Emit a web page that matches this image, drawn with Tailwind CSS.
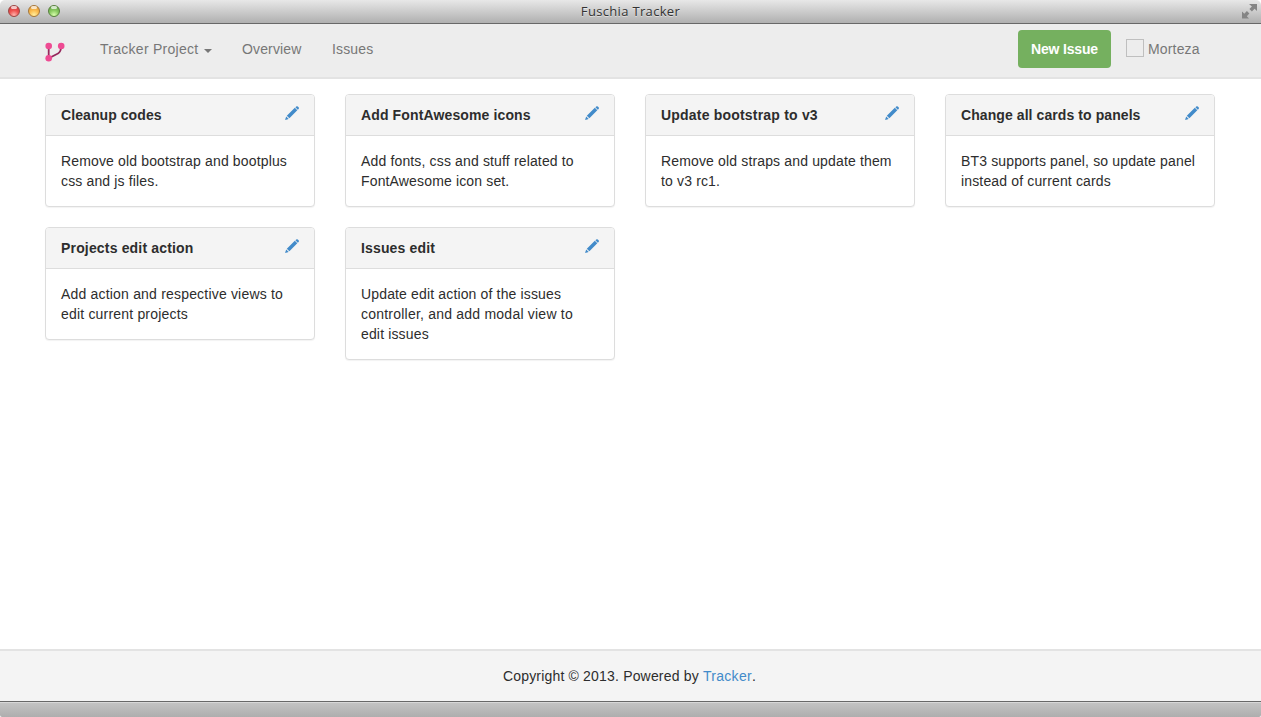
<!DOCTYPE html>
<html lang="en">
<head>
<meta charset="utf-8">
<title>Fuschia Tracker</title>
<script src="https://cdn.jsdelivr.net/npm/@tailwindcss/browser@4"></script>
</head>
<body class="bg-white">
<svg class="hidden">
  <symbol id="pencil" viewBox="0 0 14 14">
    <path fill="#428bca" d="M11.200.5a1.200 1.200 0 0 1 1.600 0l.8.8a1.200 1.200 0 0 1 0 1.600l-.8.8-2.400-2.400zM9.800 1.800l2.500 2.500-7.900 7.900L1.800 9.700zM1.200 10.400l2.500 2.500L0 14z"/>
  </symbol>
</svg>
<div class="flex h-[717px] w-[1261px] flex-col overflow-hidden rounded-t-[5px] rounded-b-[2px] bg-white text-[14px] leading-5 text-[#2d2d2d] font-['Liberation_Sans',Arial,sans-serif]">
  <header class="grid h-6 shrink-0 grid-cols-[1fr_auto_1fr] items-center border-b border-[#686868] bg-linear-to-b from-[#e8e8e8] to-[#b0b0b0] pr-1 pl-2">
    <div class="flex gap-2 pb-px">
      <span class="h-3 w-3 rounded-full border border-[#9a4643] bg-[radial-gradient(circle_at_50%_90%,#ffb5ae_0%,#ee5350_45%,#c93235_100%)]"><i class="mx-auto block h-[3px] w-[6px] rounded-full bg-white/70"></i></span>
      <span class="h-3 w-3 rounded-full border border-[#a47638] bg-[radial-gradient(circle_at_50%_90%,#fff0a0_0%,#fbbd50_45%,#d98b2d_100%)]"><i class="mx-auto block h-[3px] w-[6px] rounded-full bg-white/70"></i></span>
      <span class="h-3 w-3 rounded-full border border-[#567f3d] bg-[radial-gradient(circle_at_50%_90%,#d9ffae_0%,#8bcb62_45%,#58993c_100%)]"><i class="mx-auto block h-[3px] w-[6px] rounded-full bg-white/70"></i></span>
    </div>
    <h1 class="-ml-1 pb-0.5 text-[13px] tracking-[0.33px] text-[#333] font-['Open_Sans',sans-serif] [text-shadow:0_1px_0_#ffffff80]">Fuschia Tracker</h1>
    <svg class="h-[15px] w-[15px] justify-self-end" viewBox="0 0 15 15" fill="#858585"><path d="M7 0h8v7l-2.400-2.200-2.700 2.700-2.500-2.400 2.500-2.700zM0 7.500l2.300 2.200 2.600-2.600 2.500 2.400-2.600 2.700L7 14.500H0z"/></svg>
  </header>

  <nav class="flex h-[55px] shrink-0 items-start border-b-2 border-[#e3e3e3] bg-[#ededed] pr-[61px] pl-[45px] text-[#777]">
    <svg class="mt-[18px] h-5 w-5" viewBox="0 0 20 20"><path d="M3.700 4v12.200L13 11.500Q16 10 16.200 4" fill="none" stroke="#96285c" stroke-width="1.800"/><g fill="#ee4b93"><circle cx="3.700" cy="4" r="3.300"/><circle cx="16.200" cy="4" r="3.300"/><circle cx="3.700" cy="16.200" r="3.300"/></g></svg>
    <a class="mt-[15px] ml-[35px] flex w-[112px] items-center whitespace-nowrap"><span class="w-[99px] tracking-[0.27px]">Tracker Project</span><i class="mt-1 ml-[5px] border-x-4 border-t-4 border-x-transparent border-t-[#777]"></i></a>
    <a class="mt-[15px] ml-[30px] w-[60px] tracking-[0.14px]">Overview</a>
    <a class="mt-[15px] ml-[30px] tracking-[0.14px]">Issues</a>
    <button class="mt-[6px] ml-auto h-[38px] w-[93px] rounded-[4px] bg-[#75b05f] font-bold tracking-[-0.18px] text-white">New Issue</button>
    <span class="mt-[15px] ml-[15px] h-[18px] w-[18px] border border-[#bfbfbf]"></span>
    <a class="mt-[15px] ml-1 w-[52px] tracking-[0.16px]">Morteza</a>
  </nav>

  <main class="grid flex-1 grid-cols-[repeat(4,270px)] content-start items-start gap-x-[30px] gap-y-5 pt-[15px] pl-[45px] tracking-[0.15px]">
    <section class="rounded-[4px] border border-[#ddd] bg-white shadow-[0_1px_1px_#0000000d]"><div class="flex h-[41px] justify-between rounded-t-[3px] border-b border-[#ddd] bg-[#f4f4f4] px-[15px] pt-[10px]"><h3 class="font-bold tracking-[0.08px]">Cleanup codes</h3><svg class="mt-px h-[14px] w-[14px]"><use href="#pencil"/></svg></div><p class="p-[15px] whitespace-nowrap">Remove old bootstrap and bootplus<br>css and js files.</p></section>
    <section class="rounded-[4px] border border-[#ddd] bg-white shadow-[0_1px_1px_#0000000d]"><div class="flex h-[41px] justify-between rounded-t-[3px] border-b border-[#ddd] bg-[#f4f4f4] px-[15px] pt-[10px]"><h3 class="font-bold tracking-[0.13px]">Add FontAwesome icons</h3><svg class="mt-px h-[14px] w-[14px]"><use href="#pencil"/></svg></div><p class="p-[15px] whitespace-nowrap">Add fonts, css and stuff related to<br>FontAwesome icon set.</p></section>
    <section class="rounded-[4px] border border-[#ddd] bg-white shadow-[0_1px_1px_#0000000d]"><div class="flex h-[41px] justify-between rounded-t-[3px] border-b border-[#ddd] bg-[#f4f4f4] px-[15px] pt-[10px]"><h3 class="font-bold tracking-[0.2px]">Update bootstrap to v3</h3><svg class="mt-px h-[14px] w-[14px]"><use href="#pencil"/></svg></div><p class="p-[15px] whitespace-nowrap">Remove old straps and update them<br>to v3 rc1.</p></section>
    <section class="rounded-[4px] border border-[#ddd] bg-white shadow-[0_1px_1px_#0000000d]"><div class="flex h-[41px] justify-between rounded-t-[3px] border-b border-[#ddd] bg-[#f4f4f4] px-[15px] pt-[10px]"><h3 class="font-bold tracking-[0.08px]">Change all cards to panels</h3><svg class="mt-px h-[14px] w-[14px]"><use href="#pencil"/></svg></div><p class="p-[15px] whitespace-nowrap">BT3 supports panel, so update panel<br>instead of current cards</p></section>
    <section class="rounded-[4px] border border-[#ddd] bg-white shadow-[0_1px_1px_#0000000d]"><div class="flex h-[41px] justify-between rounded-t-[3px] border-b border-[#ddd] bg-[#f4f4f4] px-[15px] pt-[10px]"><h3 class="font-bold tracking-[0.17px]">Projects edit action</h3><svg class="mt-px h-[14px] w-[14px]"><use href="#pencil"/></svg></div><p class="p-[15px] tracking-[0.19px] whitespace-nowrap">Add action and respective views to<br>edit current projects</p></section>
    <section class="rounded-[4px] border border-[#ddd] bg-white shadow-[0_1px_1px_#0000000d]"><div class="flex h-[41px] justify-between rounded-t-[3px] border-b border-[#ddd] bg-[#f4f4f4] px-[15px] pt-[10px]"><h3 class="font-bold">Issues edit</h3><svg class="mt-px h-[14px] w-[14px]"><use href="#pencil"/></svg></div><p class="p-[15px] whitespace-nowrap">Update edit action of the issues<br><span class="tracking-[0.22px]">controller, and add modal view to</span><br>edit issues</p></section>
  </main>

  <footer class="h-[52px] shrink-0 border-t-2 border-[#e3e3e3] bg-[#f4f4f4] pt-[15px] pr-[2px] text-center tracking-[0.18px]">Copyright © 2013. Powered by <a class="tracking-[0.3px] text-[#428bca]">Tracker</a>.</footer>
  <div class="h-4 shrink-0 border-t border-[#686868] bg-linear-to-b from-[#c4c4c4] to-[#aeaeae] shadow-[inset_0_1px_0_#d8d8d8]"></div>
</div>
</body>
</html>
